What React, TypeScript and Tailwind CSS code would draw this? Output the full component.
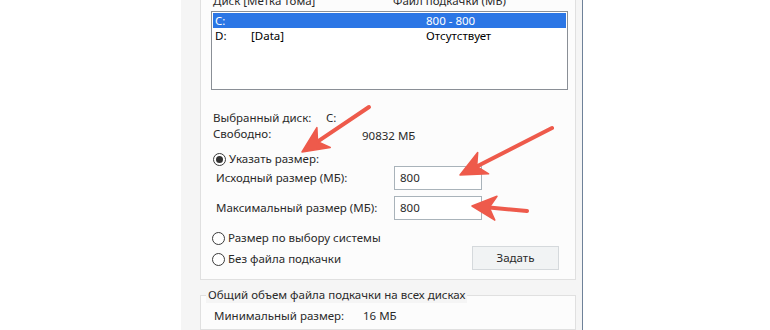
import React from "react";

function Radio({ checked }: { checked?: boolean }) {
  return (
    <span className="w-[13px] h-[13px] rounded-full border border-[#3a3a3a] bg-white flex items-center justify-center shrink-0">
      {checked && <span className="w-[7px] h-[7px] rounded-full bg-[#333]" />}
    </span>
  );
}

function Arrow({ tail, tip, head = 26, half = 12 }: { tail: [number, number]; tip: [number, number]; head?: number; half?: number }) {
  const dx = tip[0] - tail[0];
  const dy = tip[1] - tail[1];
  const len = Math.hypot(dx, dy);
  const ux = dx / len;
  const uy = dy / len;
  const bx = tip[0] - ux * head;
  const by = tip[1] - uy * head;
  const px = -uy * half;
  const py = ux * half;
  const nx = tip[0] - ux * head * 0.72;
  const ny = tip[1] - uy * head * 0.72;
  const d = `M${tip[0]},${tip[1]} L${bx + px},${by + py} L${nx},${ny} L${bx - px},${by - py} Z`;
  return (
    <g>
      <line x1={tail[0]} y1={tail[1]} x2={nx} y2={ny} stroke="#ee5a4b" strokeWidth={4} strokeLinecap="round" />
      <path d={d} fill="#ee5a4b" stroke="#ee5a4b" strokeWidth={1.5} strokeLinejoin="round" />
    </g>
  );
}

export default function App() {
  return (
    <div className="w-[770px] h-[330px] bg-white relative overflow-hidden font-['Noto_Sans',sans-serif] text-[11.5px] text-[#2a2a2a]">
      <div className="flex h-full pl-[181px]">
        <div className="w-[402px] h-full bg-[#f5f5f5] border-r border-[#6e8199] flex flex-col">
          {/* group box 1 */}
          <div className="ml-[19px] w-[376px] mt-[-8px] border border-[#e0e0e0] bg-[#fcfcfc] flex flex-col pb-[12px]">
            <div className="h-[16px] flex items-center">
              <span className="ml-[12px] w-[180px]">Диск [Метка тома]</span>
              <span>Файл подкачки (МБ)</span>
            </div>
            <div className="ml-[10px] mt-[2px] w-[357px] h-[79px] border border-[#8a8f96] bg-white p-[1px] flex flex-col">
              <div className="h-[15px] leading-[15px] bg-[#2b76e5] text-white flex items-center">
                <span className="ml-[2px] w-[211px]">C:</span>
                <span>800 - 800</span>
              </div>
              <div className="h-[15px] leading-[15px] flex items-center text-black">
                <span className="ml-[2px] w-[36px]">D:</span>
                <span className="w-[175px]">[Data]</span>
                <span>Отсутствует</span>
              </div>
            </div>
            <div className="mt-[20px] h-[16px] flex items-center ml-[12px]">
              <span className="w-[113px]">Выбранный диск:</span>
              <span>C:</span>
            </div>
            <div className="h-[16px] flex items-center ml-[12px]">
              <span className="w-[149px]">Свободно:</span>
              <span className="mt-[4px]">90832 МБ</span>
            </div>
            <div className="mt-[9px] h-[16px] flex items-center ml-[12px] gap-[3px]">
              <Radio checked />
              <span>Указать размер:</span>
            </div>
            <div className="mt-[-1px] h-[24px] flex items-center ml-[15px]">
              <span className="w-[178px]">Исходный размер (МБ):</span>
              <div className="w-[88px] h-[24px] border border-[#a9b3ba] bg-white flex items-center pl-[5px]">800</div>
            </div>
            <div className="mt-[6px] h-[24px] flex items-center ml-[15px]">
              <span className="w-[178px]">Максимальный размер (МБ):</span>
              <div className="w-[88px] h-[24px] border border-[#a9b3ba] bg-white flex items-center pl-[5px]">800</div>
            </div>
            <div className="flex items-end justify-between mt-[10px]">
              <div className="flex flex-col gap-[5px] ml-[11px]">
                <div className="h-[16px] flex items-center gap-[3px]">
                  <Radio />
                  <span>Размер по выбору системы</span>
                </div>
                <div className="h-[16px] flex items-center gap-[3px]">
                  <Radio />
                  <span>Без файла подкачки</span>
                </div>
              </div>
              <button className="mr-[16px] mb-[-3px] w-[87px] h-[24px] border border-[#d5d9dc] bg-[#f1f3f4] flex items-center justify-center">
                Задать
              </button>
            </div>
          </div>
          {/* group box 2 */}
          <div className="relative ml-[19px] w-[376px] mt-[15px] border border-[#e0e0e0] bg-[#fcfcfc] flex-1 pt-[12px]">
            <span className="absolute top-[-9px] left-[5px] px-[2px] bg-[#f5f5f5] leading-[16px]">
              Общий объем файла подкачки на всех дисках
            </span>
            <div className="h-[16px] flex items-center ml-[13px]">
              <span className="w-[149px]">Минимальный размер:</span>
              <span>16 МБ</span>
            </div>
          </div>
        </div>
      </div>
      <svg className="absolute inset-0 pointer-events-none" width="770" height="330" viewBox="0 0 770 330">
        <Arrow tail={[369, 107]} tip={[302, 152]} />
        <Arrow tail={[552, 128]} tip={[460, 175]} />
        <Arrow tail={[527, 211]} tip={[472, 206]} head={24} />
      </svg>
    </div>
  );
}
